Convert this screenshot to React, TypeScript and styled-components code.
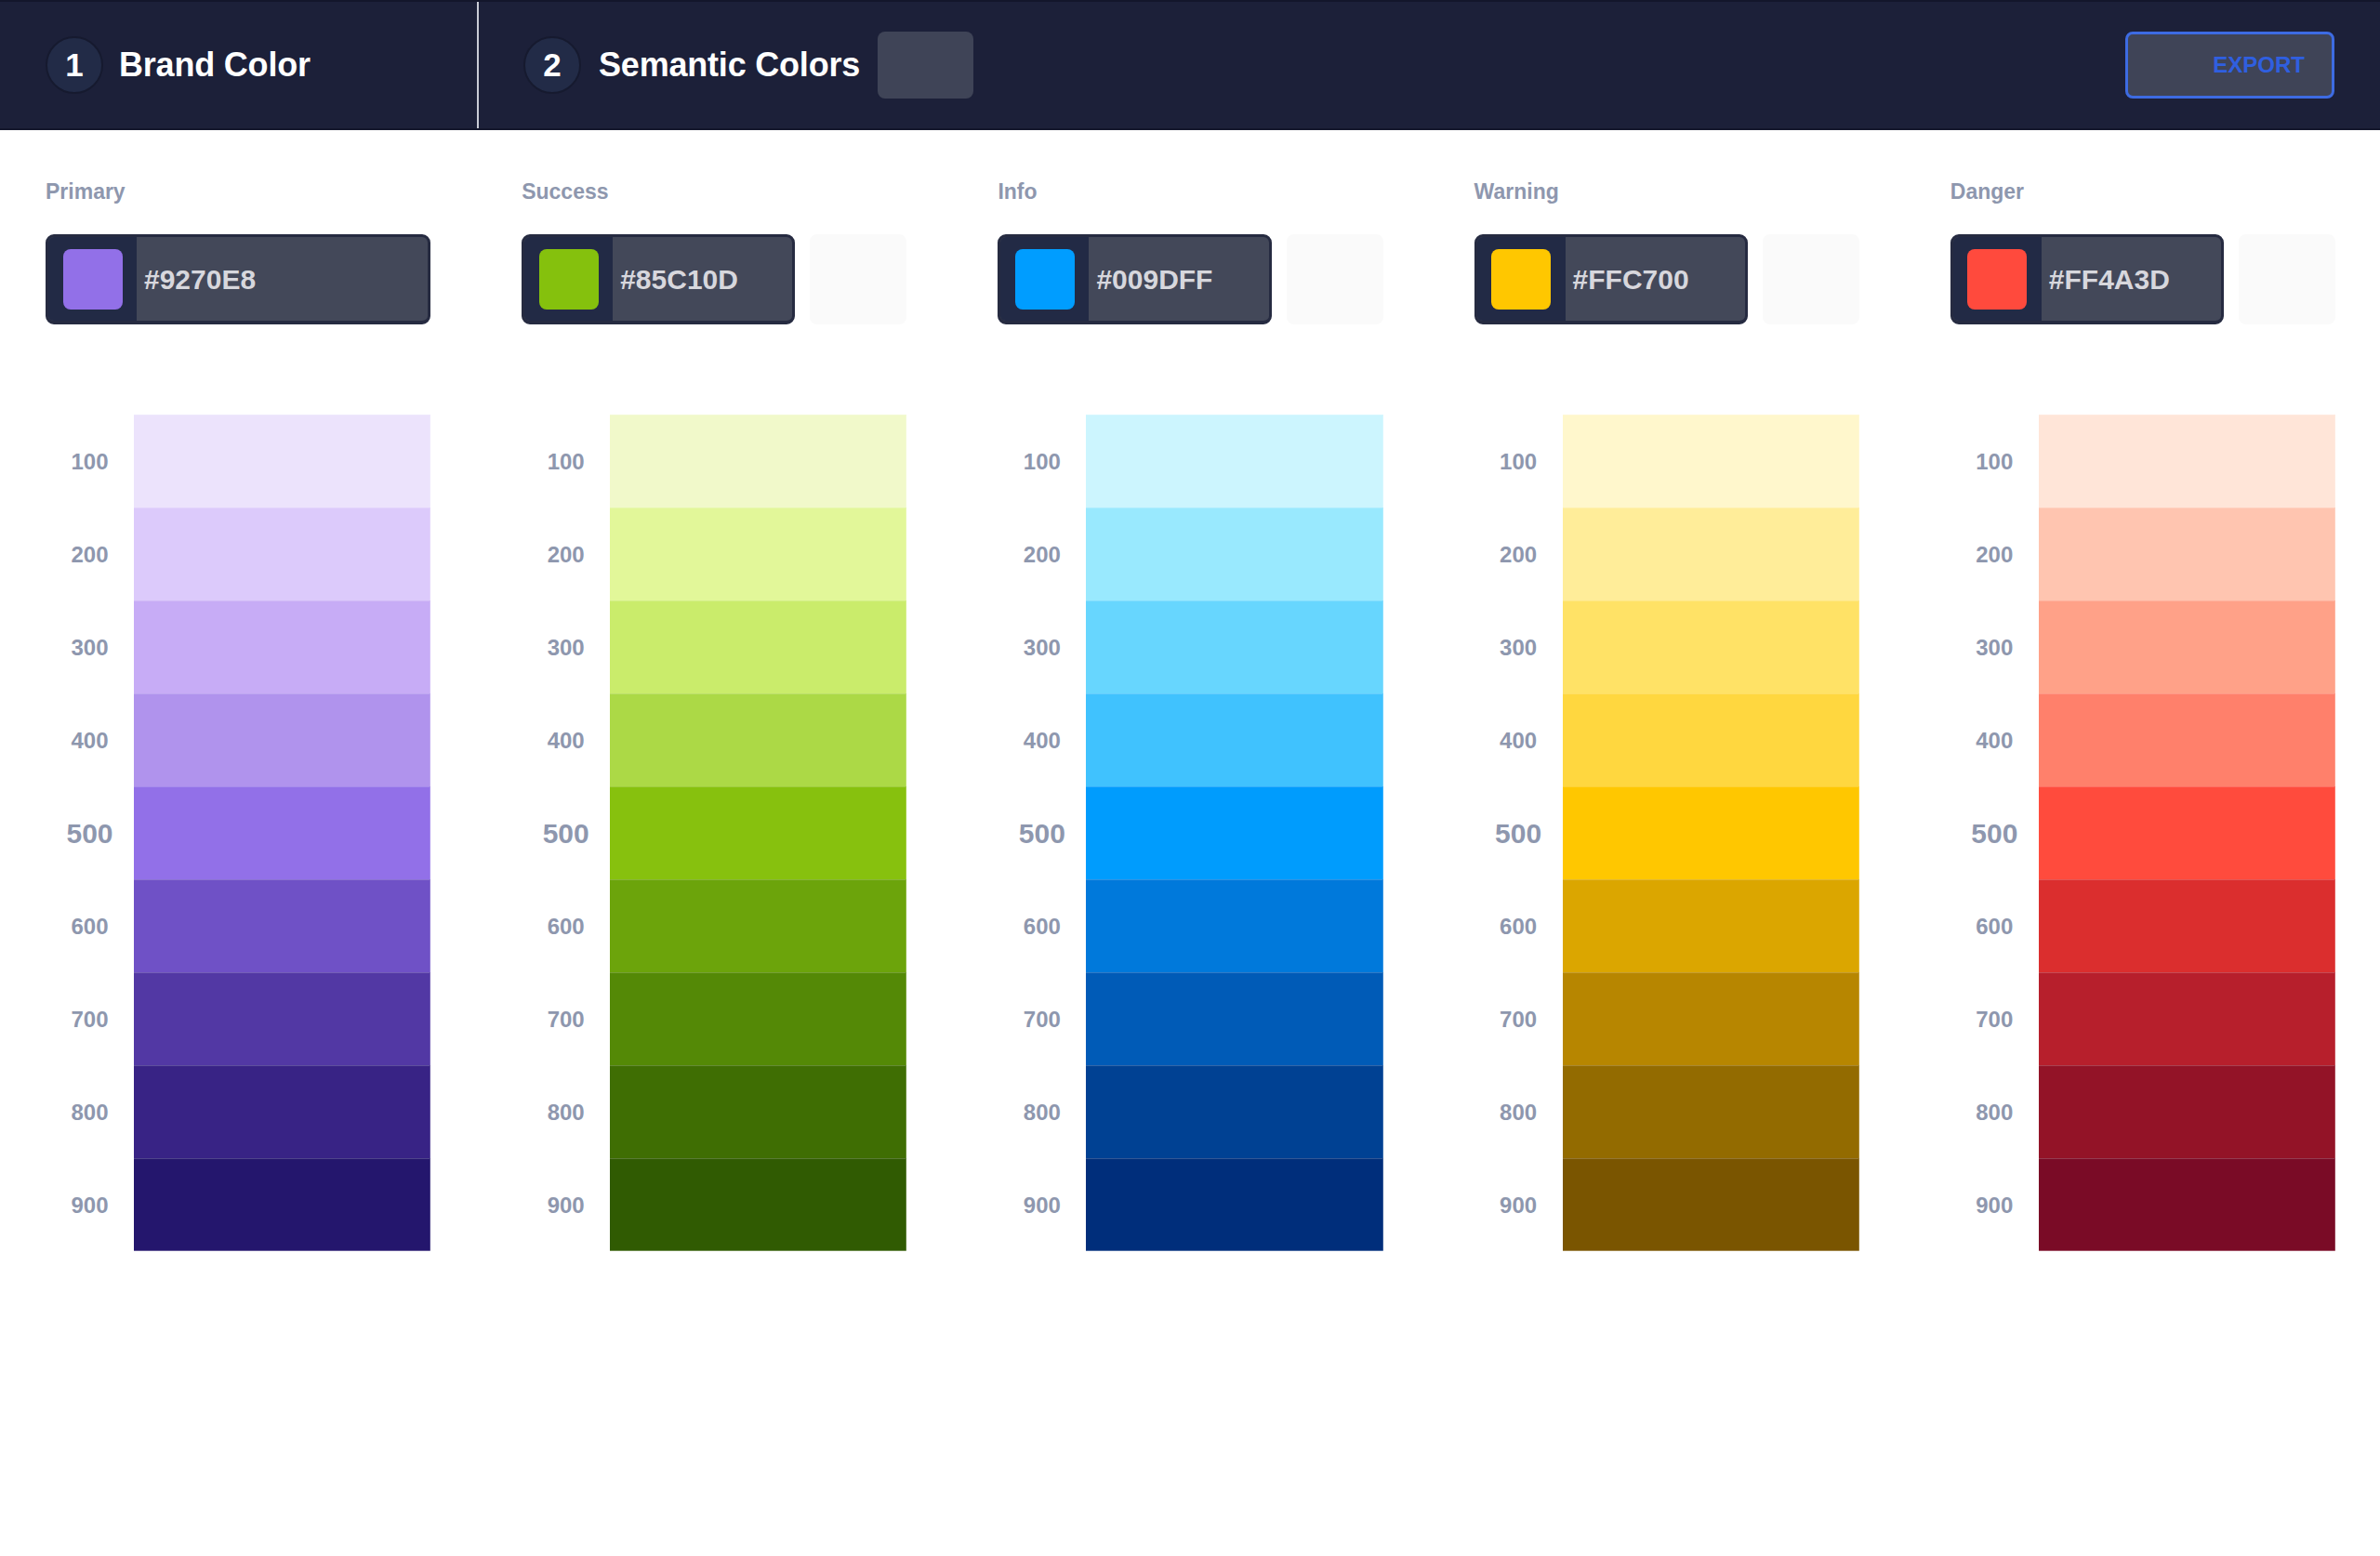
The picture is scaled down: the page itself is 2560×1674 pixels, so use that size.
import React from 'react'
import styled, { createGlobalStyle } from 'styled-components'

const GlobalStyle = createGlobalStyle`
  body {
    margin: 0;
    background: #ffffff;
    font-family: "Liberation Sans", Arial, sans-serif;
  }
`

type Palette = {
  name: string
  base: string
  shades: string[]
  brand?: boolean
}

const steps = [100, 200, 300, 400, 500, 600, 700, 800, 900]

const palettes: Palette[] = [
  {
    name: 'Primary',
    base: '#9270E8',
    brand: true,
    shades: ['#ece3fc', '#dccafb', '#c7acf6', '#b093ed', '#9270e8', '#6f51c6', '#5238a4', '#382385', '#24166d'],
  },
  {
    name: 'Success',
    base: '#85C10D',
    shades: ['#f1f9ca', '#e2f799', '#caec6b', '#acd946', '#87c10e', '#6ca40b', '#548906', '#3f6e03', '#305b02'],
  },
  {
    name: 'Info',
    base: '#009DFF',
    shades: ['#ccf5fe', '#99e9fe', '#67d6fe', '#40c2fe', '#009cfd', '#0079db', '#005bb7', '#004193', '#002e7b'],
  },
  {
    name: 'Warning',
    base: '#FFC700',
    shades: ['#fff7cc', '#ffed99', '#ffe266', '#ffd73f', '#ffc700', '#dba600', '#b78600', '#936b00', '#7a5500'],
  },
  {
    name: 'Danger',
    base: '#FF4A3D',
    shades: ['#ffe5d8', '#ffc5b0', '#ffa188', '#ff806b', '#ff4b3d', '#db2e2e', '#b71f2c', '#931327', '#7a0b26'],
  },
]

const App = () => {
  return (
    <>
      <GlobalStyle />
      <Header>
        <BrandSection>
          <StepCircle>1</StepCircle>
          <StepTitle>Brand Color</StepTitle>
        </BrandSection>
        <SemanticSection>
          <StepCircle>2</StepCircle>
          <StepTitle>Semantic Colors</StepTitle>
          <GhostBox />
        </SemanticSection>
        <ExportButton>EXPORT</ExportButton>
      </Header>

      <Main>
        {palettes.map((p) => (
          <Column key={p.name}>
            <Label>{p.name}</Label>
            <InputRow>
              <ColorInput>
                <ChipHolder>
                  <Chip color={p.base} />
                </ChipHolder>
                <HexText>{p.base}</HexText>
              </ColorInput>
              {!p.brand && <BlankBox />}
            </InputRow>
            <Scale>
              {p.shades.map((shade, index) => (
                <ScaleRow key={steps[index]}>
                  <Step $big={steps[index] === 500}>{steps[index]}</Step>
                  <Swatch color={shade} $last={index === p.shades.length - 1} />
                </ScaleRow>
              ))}
            </Scale>
          </Column>
        ))}
      </Main>
    </>
  )
}

const Header = styled.header`
  display: flex;
  align-items: stretch;
  height: 136px;
  background: #1c2039;
  border-top: 2px solid #13162b;
  border-bottom: 2px solid #14172c;
`
const BrandSection = styled.div`
  display: flex;
  align-items: center;
  gap: 17px;
  width: 464px;
  padding-left: 49px;
  border-right: 2px solid #c9ccd6;
`
const SemanticSection = styled.div`
  display: flex;
  align-items: center;
  gap: 19px;
  padding-left: 48px;
  flex: 1;
`
const StepCircle = styled.div`
  width: 58px;
  height: 58px;
  border-radius: 50%;
  background: #222b47;
  border: 2px solid #161a2f;
  color: #ffffff;
  font-size: 35px;
  font-weight: 700;
  display: flex;
  align-items: center;
  justify-content: center;
`
const StepTitle = styled.div`
  color: #ffffff;
  font-size: 36px;
  font-weight: 700;
  letter-spacing: -0.2px;
`
const GhostBox = styled.div`
  width: 103px;
  height: 72px;
  border-radius: 8px;
  background: #3f4457;
`
const ExportButton = styled.button`
  align-self: center;
  margin-right: 49px;
  width: 225px;
  height: 72px;
  box-sizing: border-box;
  border: 3px solid #3d6be2;
  border-radius: 8px;
  background: #3f4457;
  color: #2f5fe0;
  font-family: "Liberation Sans", Arial, sans-serif;
  font-size: 24px;
  font-weight: 700;
  text-align: right;
  padding: 0 29px 0 0;
`
const Main = styled.main`
  display: grid;
  grid-template-columns: repeat(5, 1fr);
  column-gap: 98px;
  padding: 53px 48px 0 49px;
`
const Column = styled.section`
  display: flex;
  flex-direction: column;
`
const Label = styled.div`
  color: #8e97ae;
  font-size: 23px;
  font-weight: 700;
  line-height: 26px;
`
const InputRow = styled.div`
  display: flex;
  gap: 16px;
  margin-top: 33px;
  height: 97px;
`
const ColorInput = styled.div`
  flex: 1;
  display: flex;
  align-items: center;
  box-sizing: border-box;
  border: 3px solid #262b41;
  border-bottom-width: 4px;
  border-radius: 9px;
  background: #434859;
  overflow: hidden;
`
const ChipHolder = styled.div`
  align-self: stretch;
  width: 95px;
  background: #222a45;
  display: flex;
  align-items: center;
  justify-content: center;
`
const Chip = styled.div<{ color: string }>`
  width: 64px;
  height: 65px;
  border-radius: 8px;
  background: ${(p) => p.color};
`
const HexText = styled.div`
  padding-left: 8px;
  padding-top: 2px;
  color: #d7d7dd;
  font-size: 30px;
  font-weight: 700;
`
const BlankBox = styled.div`
  width: 104px;
  border-radius: 8px;
  background: #fafafa;
`
const Scale = styled.div`
  display: flex;
  flex-direction: column;
  margin-top: 97px;
`
const ScaleRow = styled.div`
  display: grid;
  grid-template-columns: 95px 1fr;
  height: 100px;
`
const Step = styled.div<{ $big?: boolean }>`
  display: flex;
  align-items: center;
  justify-content: center;
  padding-top: 2px;
  color: #8e97ae;
  font-size: ${(p) => (p.$big ? '30px' : '24px')};
  font-weight: 700;
`
const Swatch = styled.div<{ color: string; $last?: boolean }>`
  background: ${(p) => p.color};
  box-shadow: inset -1px 1px 0 rgba(255, 255, 255, 0.2)
    ${(p) => (p.$last ? ', inset 0 -1px 0 rgba(255, 255, 255, 0.3)' : '')};
`

export default App
